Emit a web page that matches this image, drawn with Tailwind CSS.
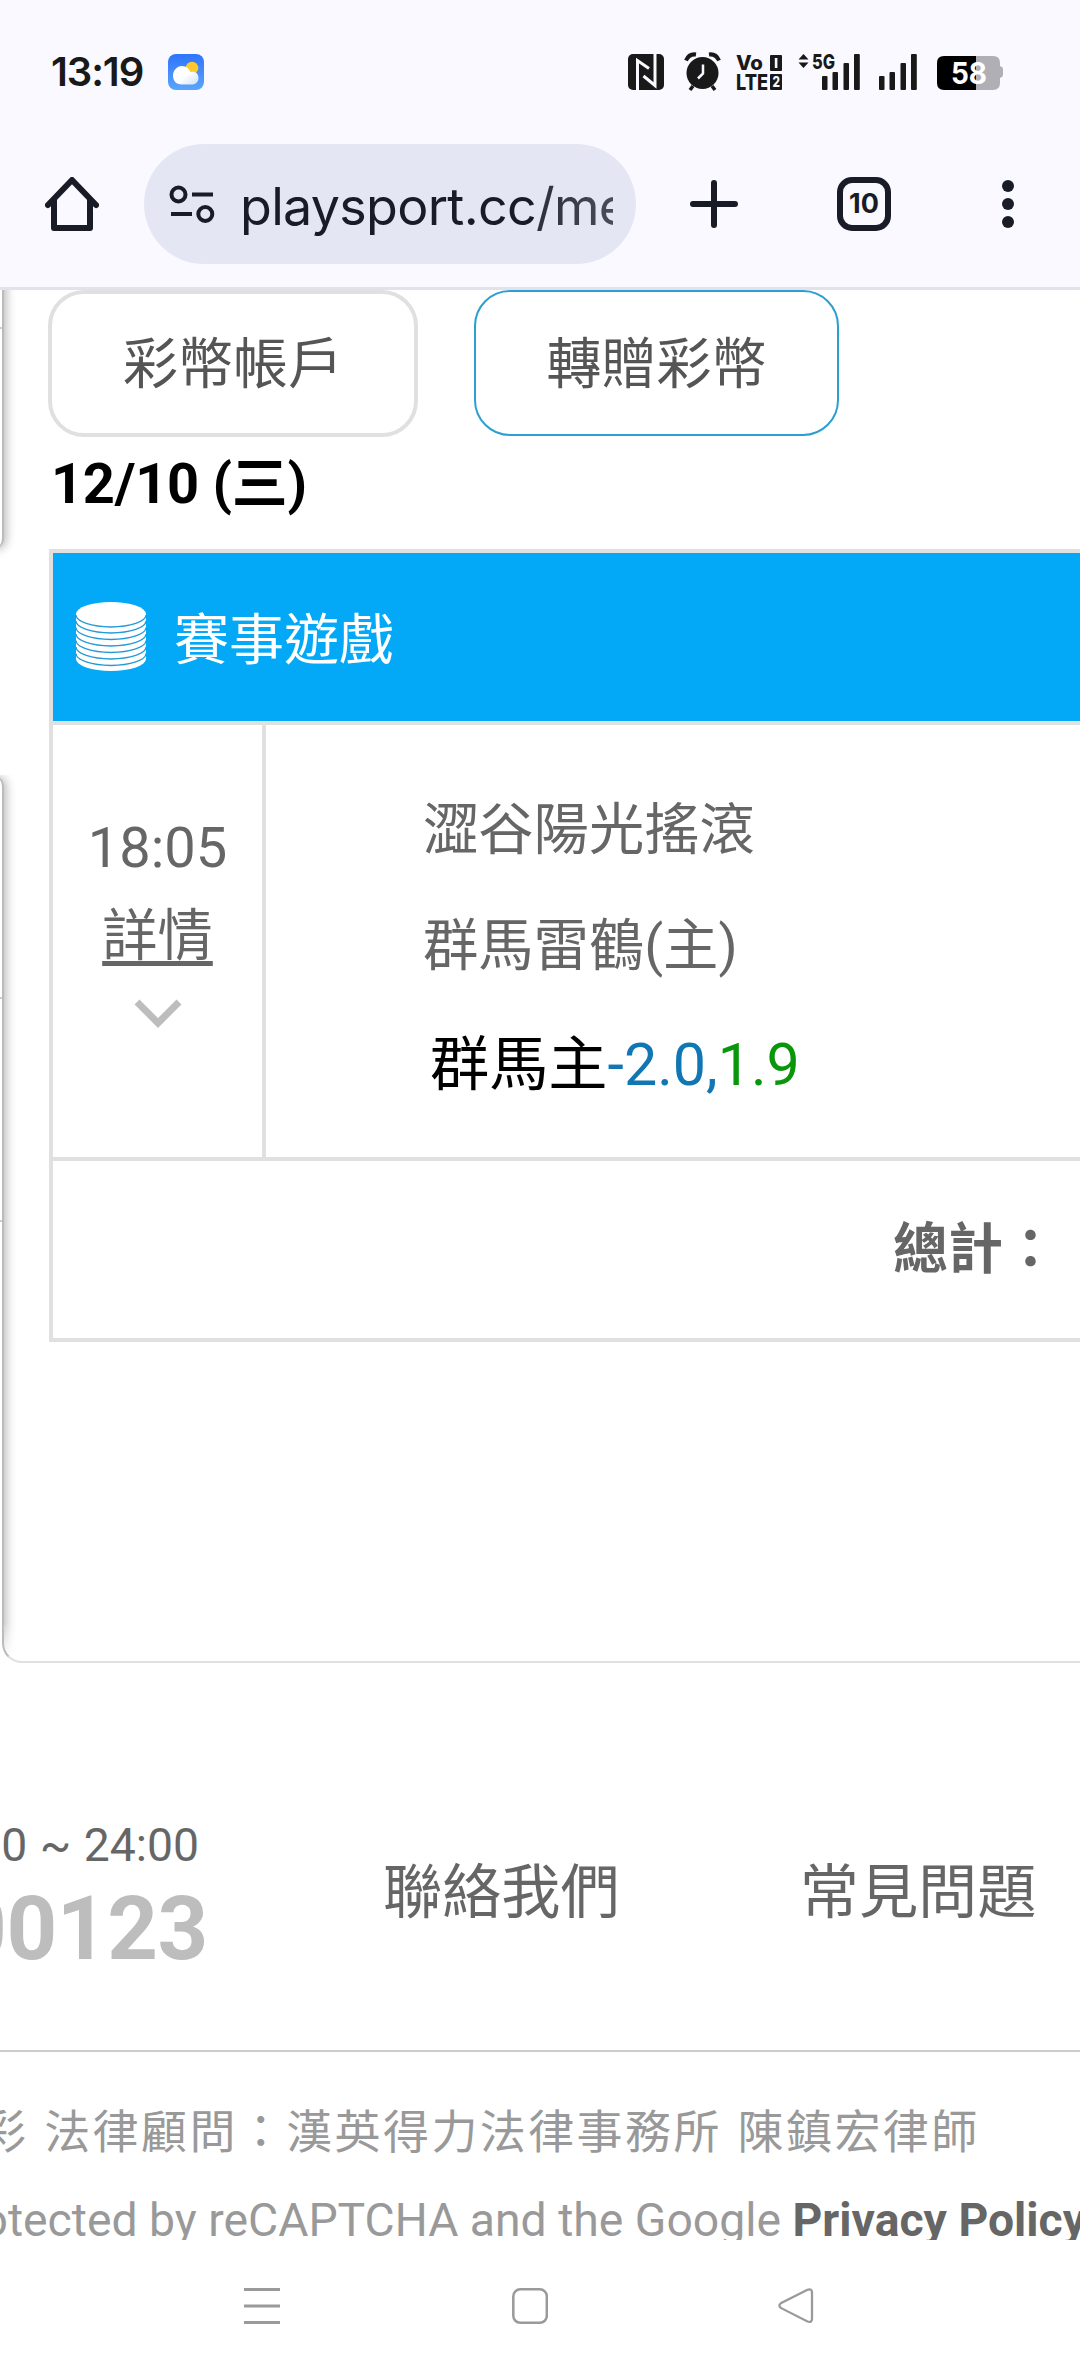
<!DOCTYPE html>
<html lang="zh-Hant">
<head>
<meta charset="utf-8">
<title>playsport.cc</title>
<script src="https://cdn.jsdelivr.net/npm/@tailwindcss/browser@4"></script>
</head>
<body class="w-[1080px] h-[2372px] overflow-hidden bg-white flex flex-col font-[Roboto,'Noto_Sans_CJK_TC',sans-serif] text-[#666]">

<!-- Status bar and browser toolbar -->
<header class="h-[290px] shrink-0 bg-[#f9f9ff] border-b-3 border-[#e2e2ec] text-[#191b26]">
  <div class="h-[144px] flex items-start pt-[48px] pl-[51px] pr-[77px] text-[#191919]">
    <span class="w-[117px] h-12 leading-[48px] text-[40px] font-semibold tracking-[-1.1px] whitespace-nowrap font-[Inter,sans-serif]">13:19</span>
    <svg class="mt-[6px]" width="36" height="36" viewBox="0 0 36 36">
      <defs>
        <linearGradient id="sky" x1="0" y1="0" x2="0" y2="1"><stop offset="0" stop-color="#2f74fb"/><stop offset="1" stop-color="#5aa5fb"/></linearGradient>
        <linearGradient id="cloud" x1="0" y1="0" x2="1" y2="1"><stop offset="0" stop-color="#fff"/><stop offset=".5" stop-color="#fff"/><stop offset="1" stop-color="#cfe0f6"/></linearGradient>
      </defs>
      <rect width="36" height="36" rx="8" fill="url(#sky)"/>
      <circle cx="24" cy="14" r="6.3" fill="#fdc92c"/>
      <path d="M13.500 30.500C8 30.500 5 26.500 5 21.500S9 12 14 12c4 0 7 2 8.500 6 4-1 8 1 8 6 0 4-3 6.500-6.500 6.500z" fill="url(#cloud)"/>
    </svg>
    <div class="ml-auto mt-[4px] flex">
      <svg width="376" height="40" viewBox="0 0 376 40" fill="#191919">
        <!-- NFC -->
        <rect x="1" y="2" width="36" height="36" rx="5"/>
        <path d="M10.500 38V8.500L22 16.500M28 2v31.500L16.500 24" fill="none" stroke="#f9f9ff" stroke-width="3"/>
        <!-- alarm -->
        <circle cx="75.500" cy="21" r="16"/>
        <path d="M59 8.500q3-7 10-6M92 8.500q-3-7-10-6" fill="none" stroke="#191919" stroke-width="4"/>
        <path d="M66 34l-3 4M85 34l3 4" stroke="#191919" stroke-width="3.500"/>
        <path d="M76 12.500v9l-5 5" fill="none" stroke="#f9f9ff" stroke-width="2.500"/>
        <!-- VoLTE -->
        <g font-family="Inter" font-weight="800">
          <text x="109" y="18" font-size="20" textLength="27" lengthAdjust="spacingAndGlyphs">Vo</text>
          <text x="109" y="37.800" font-size="21" textLength="32" lengthAdjust="spacingAndGlyphs">LTE</text>
          <rect x="143" y="3" width="12" height="16" rx="1"/>
          <rect x="143" y="22" width="12" height="16" rx="1"/>
          <rect x="147.800" y="6" width="2.600" height="10" fill="#f9f9ff"/>
          <text x="145.500" y="35" font-size="14" textLength="7.500" lengthAdjust="spacingAndGlyphs" fill="#f9f9ff">2</text>
          <text x="185" y="16.800" font-size="20.500" textLength="23" lengthAdjust="spacingAndGlyphs">5G</text>
        </g>
        <path d="M171.500 7.500h10L176.500 2zM171.500 10.500h10L176.500 16z"/>
        <!-- signal bars -->
        <rect x="195" y="24" width="5.500" height="14" rx="1"/><rect x="205.500" y="20" width="5.500" height="18" rx="1"/><rect x="216.500" y="11" width="5.500" height="27" rx="1"/><rect x="227" y="2" width="5.800" height="36" rx="1"/>
        <rect x="252" y="24" width="5.500" height="14" rx="1"/><rect x="262.500" y="20" width="5.500" height="18" rx="1"/><rect x="273.500" y="11" width="5.500" height="27" rx="1"/><rect x="284" y="2" width="5.800" height="36" rx="1"/>
        <!-- battery -->
        <path d="M349 4h17q7 0 7 7v3q3 1 3 3v6q0 2-3 3v5q0 7-7 7h-17z" fill="#b0afb5"/>
        <path d="M349 4h-32q-7 0-7 7v20q0 7 7 7h32z" fill="#000"/>
        <text x="324" y="32" font-family="Inter" font-weight="700" font-size="29.500" textLength="36" lengthAdjust="spacingAndGlyphs" fill="#fff">58</text>
      </svg>
    </div>
  </div>
  <div class="h-[120px] flex items-center pl-[45px]">
    <svg width="54" height="54" viewBox="0 0 54 54" fill="none" stroke="#191b26" stroke-width="6" stroke-linejoin="round" stroke-linecap="round">
      <path d="M3 28L27 3l24 25"/><path d="M9 24v27h36V24"/>
    </svg>
    <div class="ml-[45px] w-[492px] h-[120px] rounded-full bg-[#e4e6f3] flex items-center pl-[25px]">
      <svg width="46" height="40" viewBox="0 0 46 40" fill="none" stroke="#191b26" stroke-width="4">
        <circle cx="9.500" cy="10.500" r="7"/><path d="M23 10.500h21M2 30h21"/><circle cx="36.300" cy="30" r="7"/>
      </svg>
      <div class="ml-[25px] w-[373px] overflow-hidden whitespace-nowrap text-[52px] leading-[76px] pt-[6px] tracking-[-0.7px] font-[Inter,sans-serif]"><span>playsport.cc</span><span class="bg-linear-to-r from-[#30333f] from-5% to-[#60636f] to-60% bg-clip-text text-transparent">/member</span></div>
    </div>
    <svg class="ml-[54px]" width="48" height="48" viewBox="0 0 48 48" stroke="#191b26" stroke-width="6" stroke-linecap="round"><path d="M24 3v42M3 24h42"/></svg>
    <div class="ml-[99px] size-[54px] rounded-[15px] border-6 border-[#191b26] flex items-center justify-center text-[27px] font-bold font-[Inter,sans-serif]">10</div>
    <svg class="ml-[111px]" width="12" height="48" viewBox="0 0 12 48" fill="#191b26"><circle cx="6" cy="6" r="6"/><circle cx="6" cy="24" r="6"/><circle cx="6" cy="42" r="6"/></svg>
  </div>
</header>

<!-- Page viewport -->
<div class="relative h-[1950px] shrink-0 overflow-hidden">

  <!-- right edges of the side panels lying over the page margin -->
  <div class="absolute -top-10 -left-10 w-[44px] h-[300px] bg-white border-r-2 border-[#bbb] rounded-br-[12px] shadow-[3px_0_10px_rgba(0,0,0,0.25)]"></div>
  <div class="absolute top-[485px] left-0 w-[22px] h-[887px] overflow-hidden rounded-bl-[22px]">
    <div class="absolute top-0 -left-10 w-[44px] h-[940px] bg-white border-r-2 border-[#bbb] rounded-tr-[12px] shadow-[3px_0_10px_rgba(0,0,0,0.25)]"></div>
    <div class="absolute bottom-0 left-[3px] w-[19px] h-[40px] bg-linear-to-b from-white/0 to-white to-90%"></div>
  </div>
  <div class="absolute top-[1340px] left-0 w-[4px] h-[34px] bg-white"></div>
  <div class="absolute top-[37px] left-0 w-[2px] h-[2px] bg-[#ccc]"></div>
  <div class="absolute top-[707px] left-0 w-[2px] h-[2px] bg-[#ccc]"></div>
  <div class="absolute top-[930px] left-0 w-[2px] h-[2px] bg-[#ccc]"></div>
  <div class="absolute top-[1339px] left-[2px] w-[40px] h-[34px] border-l-2 border-b-2 border-l-[#bbb] border-b-[#e0e0e0] rounded-bl-[20px]"></div>

  <main class="h-[1373px] flex flex-col pl-[48px]">
    <div class="flex gap-[56px] text-[55px] text-[#555]">
      <a class="w-[370px] h-[147px] pt-[2px] rounded-[36px] border-4 border-[#e0e0e0] flex items-center justify-center">彩幣帳戶</a>
      <a class="w-[365px] h-[146px] pt-[3px] rounded-[36px] border-2 border-[#2a9fd0] flex items-center justify-center">轉贈彩幣</a>
    </div>
    <h2 class="h-[112px] leading-[94px] pl-[3px] text-[56px] tracking-[-0.3px] font-bold text-black">12/10 (三)</h2>

    <div class="ml-px w-[1100px] border-4 border-[#e0e0e0]">
      <div class="h-[168px] flex items-center pl-[23px] bg-[#03a9f6] text-white text-[55px]">
        <svg class="mt-[-2px]" width="70" height="69" viewBox="0 0 70 69">
          <path d="M0 12v45a35 12 0 0 0 70 0V12z" fill="#fff"/>
          <ellipse cx="35" cy="12" rx="35" ry="12" fill="#fff"/>
          <path d="M0 13a35 12 0 0 0 70 0M0 19a35 12 0 0 0 70 0M0 25.500a35 12 0 0 0 70 0M0 32a35 12 0 0 0 70 0M0 38.500a35 12 0 0 0 70 0M0 45a35 12 0 0 0 70 0M0 51.500a35 12 0 0 0 70 0" fill="none" stroke="#239ad6" stroke-width="1.300"/>
        </svg>
        <span class="ml-[28px] mt-[7px]">賽事遊戲</span>
      </div>
      <div class="flex h-[440px] border-y-4 border-[#e0e0e0] text-[55.3px]">
        <div class="w-[213px] border-r-4 border-[#e0e0e0] flex flex-col items-center pt-[79px]">
          <span class="leading-[88px] text-[56px]">18:05</span>
          <span class="leading-[90px] underline decoration-5 underline-offset-[6px] [text-decoration-skip-ink:none]">詳情</span>
          <svg class="mt-[17px]" width="48" height="30" viewBox="0 0 48 30" fill="none" stroke="#bdbdbd" stroke-width="7"><path d="M3 3l21 21L45 3"/></svg>
        </div>
        <div class="pl-[157px] pt-[48px]">
          <div class="leading-[116px]">澀谷陽光搖滾</div>
          <div class="leading-[116px]">群馬雷鶴(主)</div>
          <div class="pl-[7px] leading-[120px] text-[59.200px] text-black whitespace-nowrap">群馬主<span class="text-[#1176b4]">-2.0,</span><span class="text-[#0a960a]">1.9</span></div>
        </div>
      </div>
      <div class="h-[177px] pl-[840px] leading-[176px] text-[55px] font-bold">總計：</div>
    </div>
    <div class="ml-[-24px] mt-auto h-[2px] bg-[#e0e0e0]"></div>
  </main>

  <footer>
    <div class="h-[389px] flex pt-[152px] border-b-2 border-[#ccc]">
      <div class="w-[206px] flex flex-col items-end whitespace-nowrap">
        <div class="pr-[7px] text-[46.300px] leading-[61px] [word-spacing:1px]">09:30 ~ 24:00</div>
        <div class="mr-[-2px] text-[88.500px] leading-[107px] font-bold tracking-[-0.4px] text-[#bdbdbd]">02-5500123</div>
      </div>
      <div class="ml-[177px] flex gap-[180px] text-[59.2px] leading-[156px] whitespace-nowrap">
        <a>聯絡我們</a>
        <a>常見問題</a>
      </div>
    </div>
    <div class="flex flex-col text-[46px] text-[#999] whitespace-nowrap">
      <div class="self-start ml-[-20px] mt-[36px] leading-[88px] tracking-[2.400px] [word-spacing:2px]">彩 法律顧問：漢英得力法律事務所 陳鎮宏律師</div>
      <div class="w-[1086px] flex justify-end leading-[88px] text-[46.300px]"><span class="whitespace-pre">This site is protected by reCAPTCHA and the Google </span><b class="text-[#666]">Privacy Policy</b></div>
    </div>
  </footer>
</div>

<!-- System navigation -->
<nav class="relative h-[132px] shrink-0 bg-white flex items-start pt-[47px] pl-[244px]">
  <svg width="36" height="38" viewBox="0 0 36 38" stroke="#9a9a9a" stroke-width="3"><path d="M0 2.500h36M0 19h36M0 35.500h36"/></svg>
  <svg class="ml-[232px]" width="36" height="38" viewBox="0 0 36 38" fill="none" stroke="#9a9a9a" stroke-width="2.500"><rect x="1.300" y="2.300" width="33.500" height="33.500" rx="7"/></svg>
  <svg class="ml-[230px]" width="36" height="38" viewBox="0 0 36 38" fill="none" stroke="#9a9a9a" stroke-width="2.300"><path d="M29.500 2.800L2.800 16.300Q0 18.500 2.800 20.900L29.500 34.500Q34 36 34 32V5.500Q34 1.500 29.500 2.800z"/></svg>
</nav>
</body>
</html>
